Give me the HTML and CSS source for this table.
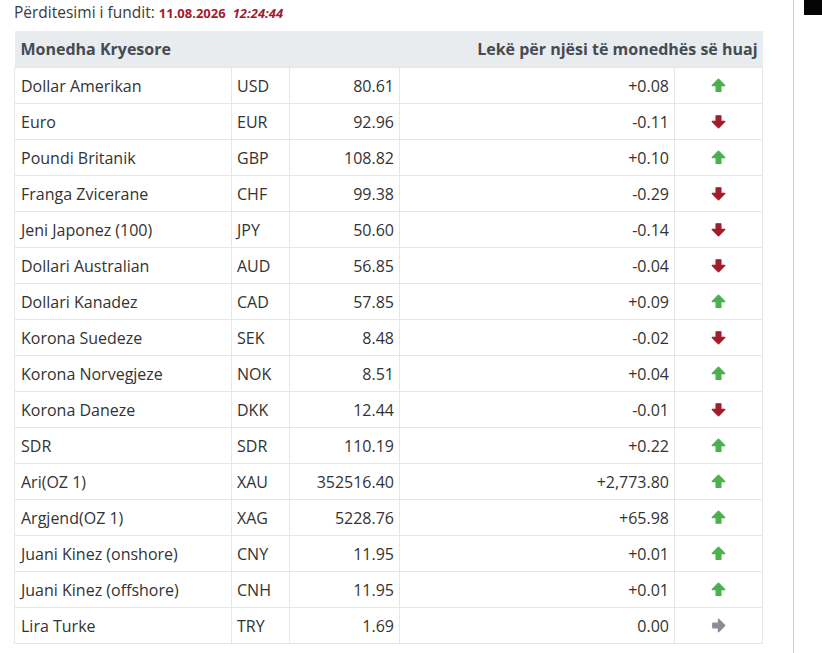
FILE: index.html
```html
<!DOCTYPE html>
<html lang="sq">
<head>
<meta charset="utf-8">
<title>Kursi i këmbimit</title>
<link rel="stylesheet" href="styles.css">
</head>
<body>
<div class="page">
  <div class="main">
    <div class="updated">Përditesimi i fundit: <span class="date">11.08.2026</span> <span class="time">12:24:44</span></div>
    <table class="rates">
      <colgroup>
        <col class="c-name"><col class="c-code"><col class="c-rate"><col class="c-chg"><col class="c-dir">
      </colgroup>
      <thead>
        <tr><th colspan="2" class="th-left">Monedha Kryesore</th><th colspan="3" class="th-right">Lekë për njësi të monedhës së huaj</th></tr>
      </thead>
      <tbody id="rows"></tbody>
    </table>
  </div>
  <div class="divider"></div>
  <div class="side"><div class="blackbox"></div></div>
</div>
<script>
var data = [
 ["Dollar Amerikan","USD","80.61","+0.08","up"],
 ["Euro","EUR","92.96","-0.11","down"],
 ["Poundi Britanik","GBP","108.82","+0.10","up"],
 ["Franga Zvicerane","CHF","99.38","-0.29","down"],
 ["Jeni Japonez (100)","JPY","50.60","-0.14","down"],
 ["Dollari Australian","AUD","56.85","-0.04","down"],
 ["Dollari Kanadez","CAD","57.85","+0.09","up"],
 ["Korona Suedeze","SEK","8.48","-0.02","down"],
 ["Korona Norvegjeze","NOK","8.51","+0.04","up"],
 ["Korona Daneze","DKK","12.44","-0.01","down"],
 ["SDR","SDR","110.19","+0.22","up"],
 ["Ari(OZ 1)","XAU","352516.40","+2,773.80","up"],
 ["Argjend(OZ 1)","XAG","5228.76","+65.98","up"],
 ["Juani Kinez (onshore)","CNY","11.95","+0.01","up"],
 ["Juani Kinez (offshore)","CNH","11.95","+0.01","up"],
 ["Lira Turke","TRY","1.69","0.00","flat"]
];
var arrow = '<path d="M7 1.2 L12.8 7 L9.2 7 L9.2 12.3 L4.8 12.3 L4.8 7 L1.2 7 Z"/>';
var icons = {
 up: '<svg class="ic up" viewBox="0 0 14 14" width="15" height="15">' + arrow + '</svg>',
 down: '<svg class="ic down" viewBox="0 0 14 14" width="15" height="15"><g transform="rotate(180 7 7)">' + arrow + '</g></svg>',
 flat: '<svg class="ic flat" viewBox="0 0 14 14" width="15" height="15"><g transform="rotate(90 7 7)">' + arrow + '</g></svg>'
};
var html = "";
data.forEach(function(r){
  html += '<tr><td class="name">'+r[0]+'</td><td>'+r[1]+'</td><td class="num">'+r[2]+'</td><td class="num">'+r[3]+'</td><td class="dir">'+icons[r[4]]+'</td></tr>';
});
document.getElementById("rows").innerHTML = html;
</script>
</body>
</html>
```
FILE: styles.css
```css
html, body {
  margin: 0;
  padding: 0;
  background: #fff;
}
body {
  font-family: "Open Sans", "Noto Sans", sans-serif;
  color: #333;
}
.page {
  display: flex;
  height: 653px;
  overflow: hidden;
}
.main {
  padding-left: 14px;
  width: 748px;
  flex: none;
}
.updated {
  font-size: 15.5px;
  line-height: 24px;
  height: 31px;
  color: #3a3a3a;
  white-space: nowrap;
}
.updated .date,
.updated .time {
  color: #a31c2e;
  font-weight: 700;
  font-size: 13px;
}
.updated .time {
  font-style: italic;
  margin-left: 3px;
}
.rates {
  width: 748px;
  border-collapse: collapse;
  table-layout: fixed;
  font-size: 16px;
}
.c-name { width: 217px; }
.c-code { width: 58px; }
.c-rate { width: 110px; }
.c-chg { width: 275px; }
.c-dir { width: 88px; }
.rates th {
  background: #e9ecef;
  color: #454b52;
  font-weight: 700;
  height: 36px;
  padding: 0 5px 0 6px;
  border: none;
  white-space: nowrap;
}
.th-left { text-align: left; }
.th-right { text-align: right; }
.rates td {
  height: 35px;
  padding: 0 5px;
  border: 1px solid #e3e6ea;
  white-space: nowrap;
  color: #333;
}
.rates td.name {
  padding-left: 6px;
}
.rates td.num {
  text-align: right;
  padding-right: 5px;
}
.rates td.dir {
  text-align: center;
  padding: 0;
}
.ic {
  display: inline-block;
  vertical-align: middle;
  margin-top: -3px;
}
.ic path {
  stroke-linejoin: round;
  stroke-width: 1.3;
}
.ic.up { fill: #4db04f; stroke: #4db04f; }
.ic.down { fill: #a11d2b; stroke: #a11d2b; }
.ic.flat { fill: #878d94; stroke: #878d94; }
.divider {
  margin-left: 31px;
  width: 1px;
  background: #cfcfcf;
  flex: none;
}
.side {
  padding-left: 10px;
  flex: 1;
}
.blackbox {
  width: 18px;
  height: 15px;
  background: #050505;
}
```
